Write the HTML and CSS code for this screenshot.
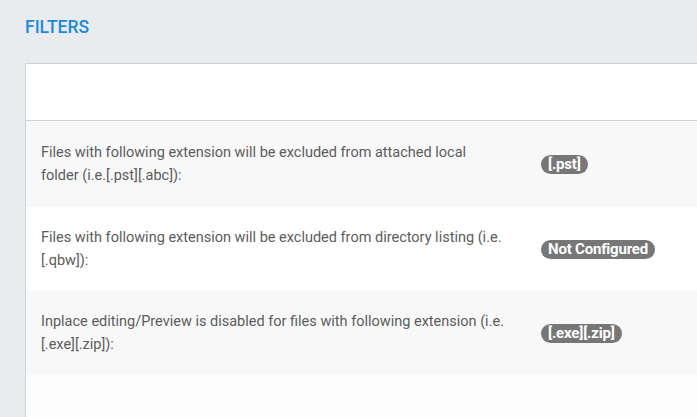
FILE: index.html
```html
<!DOCTYPE html>
<html>
<head>
<meta charset="utf-8">
<link rel="stylesheet" href="styles.css">
</head>
<body>
<div class="page">
  <h2 class="title">FILTERS</h2>
  <div class="card">
    <div class="card-head"></div>
    <div class="row alt">
      <div class="label">Files with following extension will be excluded from attached local folder (i.e.[.pst][.abc]):</div>
      <div class="value"><span class="badge">[.pst]</span></div>
    </div>
    <div class="row">
      <div class="label">Files with following extension will be excluded from directory listing (i.e. [.qbw]):</div>
      <div class="value"><span class="badge">Not Configured</span></div>
    </div>
    <div class="row alt">
      <div class="label">Inplace editing/Preview is disabled for files with following extension (i.e. [.exe][.zip]):</div>
      <div class="value"><span class="badge">[.exe][.zip]</span></div>
    </div>
    <div class="card-foot"></div>
  </div>
</div>
</body>
</html>
```
FILE: styles.css
```css
html, body {
  margin: 0;
  padding: 0;
  background: #e9ecef;
  overflow: hidden;
  font-family: Roboto, "Liberation Sans", sans-serif;
}
.page {
  padding: 17px 0 0 25px;
}
.title {
  margin: 0 0 25px 0;
  font-size: 17.5px;
  line-height: 21px;
  font-weight: 500;
  color: #1e88e0;
}
.card {
  width: 800px;
  background: #ffffff;
  border: 1px solid #cfd1d3;
  border-right: none;
}
.card-head {
  height: 56px;
  border-bottom: 1px solid #cfd1d3;
}
.row {
  display: flex;
  align-items: center;
  height: 86px;
  background: #ffffff;
}
.row + .row {
  height: 84px;
}
.row.alt {
  background: #f8f8f8;
}
.label {
  width: 464px;
  padding: 0 23px 0 15px;
  font-size: 14.5px;
  line-height: 23px;
  color: #5c5c5c;
}
.value {
  padding-left: 13px;
}
.badge {
  display: inline-block;
  background: #777777;
  color: #ffffff;
  font-size: 15px;
  font-weight: 700;
  line-height: 19px;
  padding: 0 7px;
  border-radius: 10px;
  letter-spacing: -0.2px;
}
.card-foot {
  height: 60px;
  background: #fdfdfd;
}
```
